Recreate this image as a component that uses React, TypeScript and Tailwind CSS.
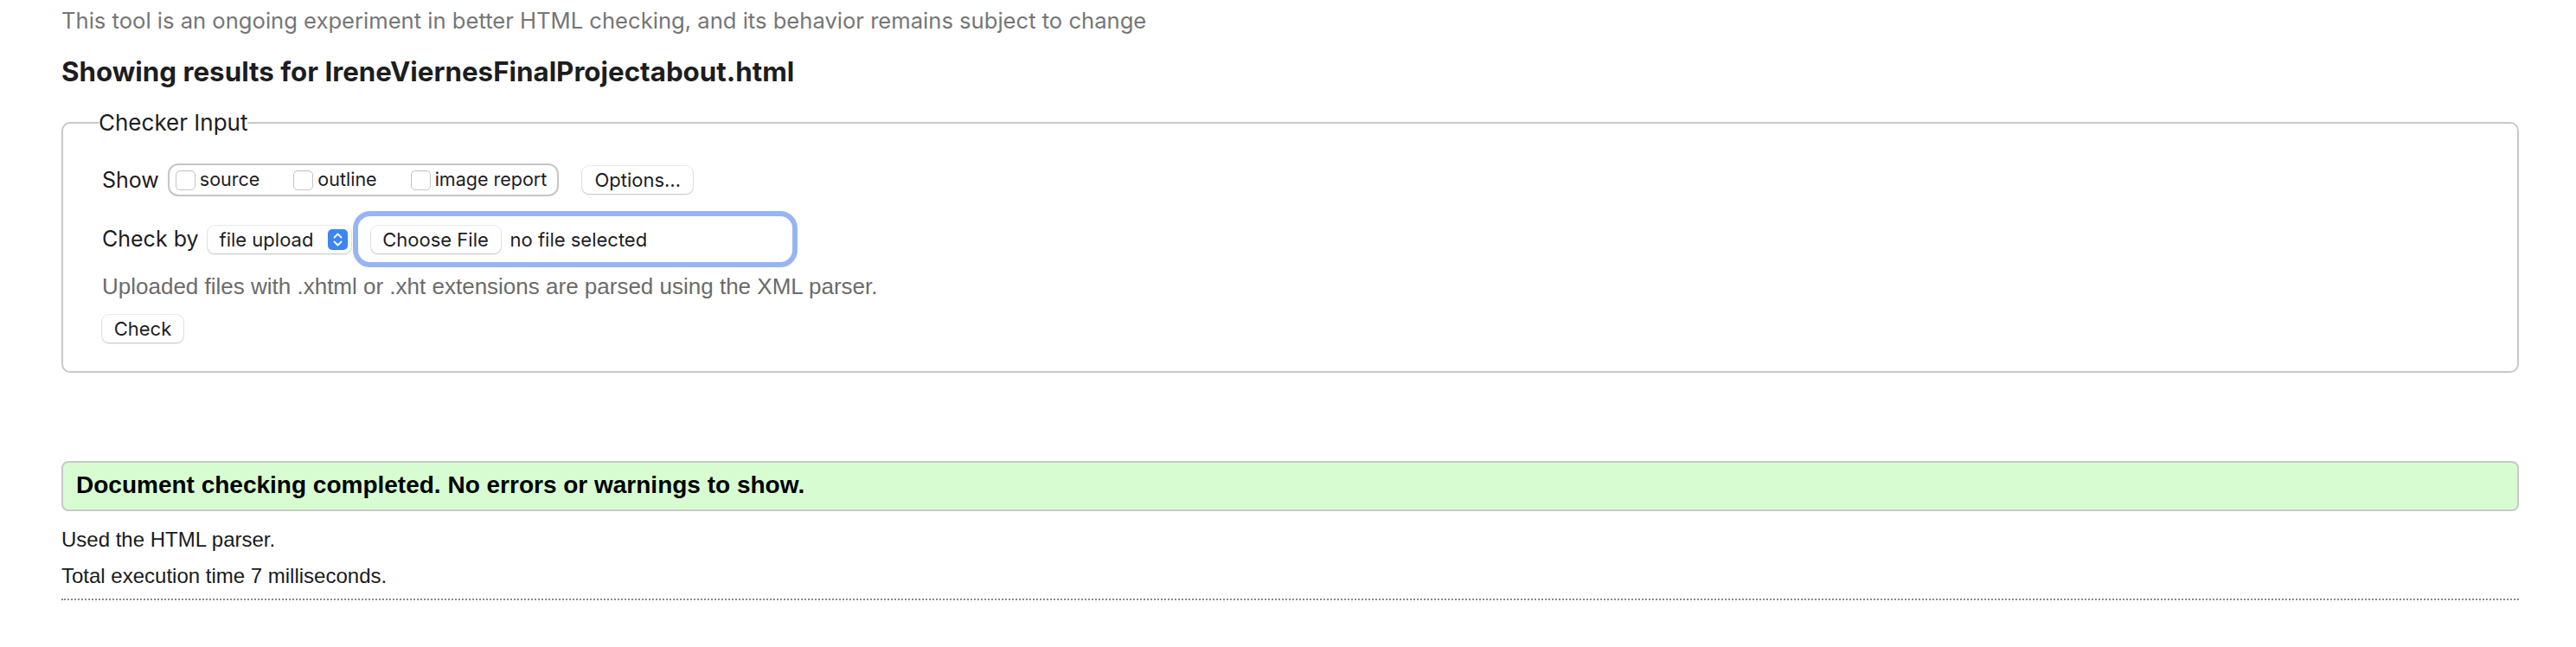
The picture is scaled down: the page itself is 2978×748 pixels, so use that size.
import React from 'react';

// Safari-like push button (white, hairline border + soft shadow)
const btn =
  "flex items-center h-[32px] rounded-[8px] bg-white text-[22px] leading-none text-[#1d1d1f] shadow-[0_1px_2px_rgba(0,0,0,0.18),0_0_0_1px_rgba(0,0,0,0.08)]";

function Checkbox({ label, first }: { label: string; first?: boolean }) {
  return (
    <div className={`flex items-center ${first ? '' : 'ml-[39px]'}`}>
      <span className="w-[23px] h-[23px] rounded-[5px] bg-white border border-[#c4c4c4] shadow-[inset_0_1px_1px_rgba(0,0,0,0.04)]" />
      <span className="ml-[5px] text-[21.5px] leading-none text-[#1d1d1f]">{label}</span>
    </div>
  );
}

function Stepper() {
  return (
    <svg width="23" height="24" viewBox="0 0 23 24" className="shrink-0">
      <rect x="0" y="0" width="23" height="24" rx="5" fill="#3d84f6" />
      <path d="M7.5 9.5 L11.5 5.5 L15.5 9.5" fill="none" stroke="#fff" strokeWidth="1.8" strokeLinecap="round" strokeLinejoin="round" />
      <path d="M7.5 14.5 L11.5 18.5 L15.5 14.5" fill="none" stroke="#fff" strokeWidth="1.8" strokeLinecap="round" strokeLinejoin="round" />
    </svg>
  );
}

export default function App() {
  return (
    <div className="min-h-screen bg-white pl-[71px] pr-[66px] font-['Inter',sans-serif]">
      <p className="pt-[8px] text-[25.6px] leading-[32px] text-[#767676]">
        This tool is an ongoing experiment in better HTML checking, and its behavior remains subject to change
      </p>
      <h2 className="mt-[26px] text-[31.3px] leading-[34px] font-bold text-[#1d1d1f]">
        Showing results for IreneViernesFinalProjectabout.html
      </h2>

      <fieldset className="mt-[26px] border-2 border-[#c8c8c8] rounded-[10px] pl-[41px] pb-[33px]">
        <legend className="text-[26px] leading-[32px] text-[#1d1d1f]">Checker Input</legend>
        <div className="pl-[4px] pt-[31px]">
          {/* Show row */}
          <div className="flex items-center h-[38px]">
            <span className="text-[25px] leading-none text-[#1d1d1f]">Show</span>
            <div className="ml-[10px] flex items-center h-[38px] border-2 border-[#c6c6c6] rounded-[12px] pl-[7px] pr-[12px]">
              <Checkbox label="source" first />
              <Checkbox label="outline" />
              <Checkbox label="image report" />
            </div>
            <button className={`${btn} justify-center ml-[27px] w-[128px]`}>Options…</button>
          </div>

          {/* Check by row */}
          <div className="mt-[17px] flex items-center">
            <span className="text-[25px] leading-none text-[#1d1d1f]">Check by</span>
            <div className={`${btn} justify-between ml-[10px] w-[166px] pl-[14px] pr-[4px]`}>
              <span>file upload</span>
              <Stepper />
            </div>
            <div className="ml-[2px] flex items-center w-[514px] h-[65px] border-[6px] border-[#98b5f3] rounded-[20px] pl-[15px]">
              <button className={`${btn} justify-center w-[150px]`}>Choose File</button>
              <span className="ml-[11px] text-[22px] leading-none text-[#1d1d1f]">no file selected</span>
            </div>
          </div>

          <p className="mt-[7px] font-['Liberation_Sans',Arial,sans-serif] text-[26px] leading-[30px] text-[#6b6b6b]">
            Uploaded files with .xhtml or .xht extensions are parsed using the XML parser.
          </p>

          <button className={`${btn} justify-center mt-[18px] w-[94px]`}>Check</button>
        </div>
      </fieldset>

      <div className="mt-[102px] border-2 border-[#c8c8c8] rounded-[8px] bg-[#d8fcd2] pl-[15px] pt-[10px] pb-[12px]">
        <p className="font-['Liberation_Sans',Arial,sans-serif] font-bold text-[28px] leading-[32px] text-black">
          Document checking completed. No errors or warnings to show.
        </p>
      </div>

      <p className="mt-[19px] font-['Liberation_Sans',Arial,sans-serif] text-[24px] leading-[28px] text-[#1a1a1a]">
        Used the HTML parser.
      </p>
      <p className="mt-[14px] font-['Liberation_Sans',Arial,sans-serif] text-[24px] leading-[28px] text-[#1a1a1a]">
        Total execution time 7 milliseconds.
      </p>
      <div className="mt-[12px] border-b-2 border-dotted border-[#8a8a8a]" />
    </div>
  );
}
